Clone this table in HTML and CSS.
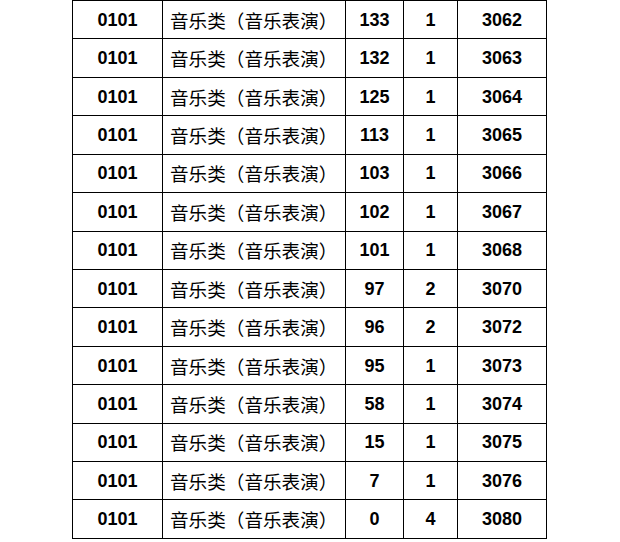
FILE: index.html
```html
<!DOCTYPE html>
<html lang="zh">
<head>
<meta charset="utf-8">
<link rel="stylesheet" href="styles.css">
</head>
<body>
<table class="score-table">
  <colgroup>
    <col class="c-code"><col class="c-name"><col class="c-score"><col class="c-count"><col class="c-rank">
  </colgroup>
  <tbody>
    <tr><td class="num">0101</td><td class="name">音乐类（音乐表演）</td><td class="num">133</td><td class="num">1</td><td class="num">3062</td></tr>
    <tr><td class="num">0101</td><td class="name">音乐类（音乐表演）</td><td class="num">132</td><td class="num">1</td><td class="num">3063</td></tr>
    <tr><td class="num">0101</td><td class="name">音乐类（音乐表演）</td><td class="num">125</td><td class="num">1</td><td class="num">3064</td></tr>
    <tr><td class="num">0101</td><td class="name">音乐类（音乐表演）</td><td class="num">113</td><td class="num">1</td><td class="num">3065</td></tr>
    <tr><td class="num">0101</td><td class="name">音乐类（音乐表演）</td><td class="num">103</td><td class="num">1</td><td class="num">3066</td></tr>
    <tr><td class="num">0101</td><td class="name">音乐类（音乐表演）</td><td class="num">102</td><td class="num">1</td><td class="num">3067</td></tr>
    <tr><td class="num">0101</td><td class="name">音乐类（音乐表演）</td><td class="num">101</td><td class="num">1</td><td class="num">3068</td></tr>
    <tr><td class="num">0101</td><td class="name">音乐类（音乐表演）</td><td class="num">97</td><td class="num">2</td><td class="num">3070</td></tr>
    <tr><td class="num">0101</td><td class="name">音乐类（音乐表演）</td><td class="num">96</td><td class="num">2</td><td class="num">3072</td></tr>
    <tr><td class="num">0101</td><td class="name">音乐类（音乐表演）</td><td class="num">95</td><td class="num">1</td><td class="num">3073</td></tr>
    <tr><td class="num">0101</td><td class="name">音乐类（音乐表演）</td><td class="num">58</td><td class="num">1</td><td class="num">3074</td></tr>
    <tr><td class="num">0101</td><td class="name">音乐类（音乐表演）</td><td class="num">15</td><td class="num">1</td><td class="num">3075</td></tr>
    <tr><td class="num">0101</td><td class="name">音乐类（音乐表演）</td><td class="num">7</td><td class="num">1</td><td class="num">3076</td></tr>
    <tr><td class="num">0101</td><td class="name">音乐类（音乐表演）</td><td class="num">0</td><td class="num">4</td><td class="num">3080</td></tr>
  </tbody>
</table>
</body>
</html>
```
FILE: styles.css
```css
html, body {
  margin: 0;
  padding: 0;
  background: #ffffff;
}

body {
  font-family: "Liberation Sans", Arial, "Noto Sans CJK SC", sans-serif;
  color: #000000;
}

.score-table {
  margin-left: 72px;
  border-collapse: collapse;
  table-layout: fixed;
  width: 474px;
}

.c-code { width: 90px; }
.c-name { width: 183px; }
.c-score { width: 58px; }
.c-count { width: 54px; }
.c-rank { width: 89px; }

.score-table tr {
  height: 38.43px;
}

.score-table td {
  border: 1px solid #000000;
  padding: 0;
  font-size: 18px;
  line-height: 20px;
  vertical-align: middle;
  white-space: nowrap;
}

.num {
  text-align: center;
  font-weight: bold;
}

.score-table td.name {
  text-align: left;
  padding-left: 7px;
  font-family: "Noto Sans CJK SC", "Liberation Sans", sans-serif;
  font-size: 18.6px;
  font-weight: normal;
}
```
